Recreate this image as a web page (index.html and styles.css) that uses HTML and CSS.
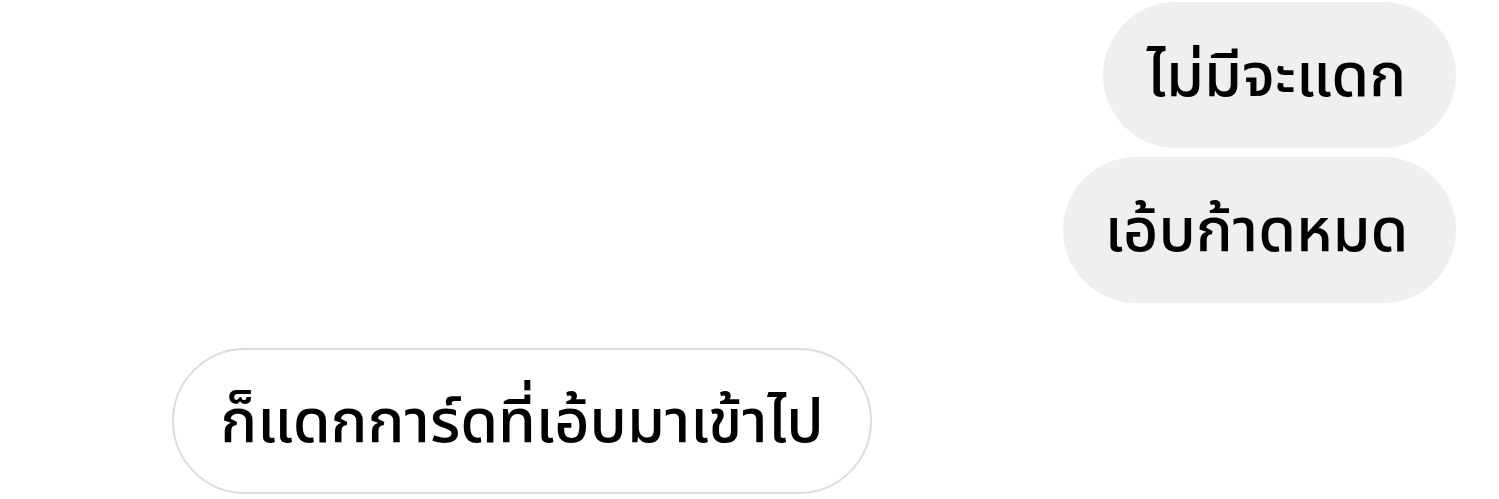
FILE: index.html
```html
<!DOCTYPE html>
<html lang="th">
<head>
<meta charset="utf-8">
<link rel="stylesheet" href="styles.css">
</head>
<body>
<div class="chat">
  <div class="row out"><div class="bubble gray b1">ไม่มีจะแดก</div></div>
  <div class="row out"><div class="bubble gray b2">เอ้บก้าดหมด</div></div>
  <div class="row in"><div class="bubble white b3">ก็แดกการ์ดที่เอ้บมาเข้าไป</div></div>
</div>
</body>
</html>
```
FILE: styles.css
```css
html, body {
  margin: 0;
  padding: 0;
  background: #ffffff;
}
body {
  width: 1499px;
  height: 499px;
  overflow: hidden;
  font-family: "Noto Sans Thai", "Noto Sans", "DejaVu Sans", sans-serif;
  color: #000;
}
.chat {
  display: flex;
  flex-direction: column;
  padding-top: 2px;
}
.row {
  display: flex;
}
.row.out {
  justify-content: flex-end;
  padding-right: 43px;
  margin-bottom: 9px;
}
.row.in {
  justify-content: flex-start;
  padding-left: 172px;
  margin-top: 36px;
}
.bubble {
  box-sizing: border-box;
  height: 146px;
  border-radius: 73px;
  display: flex;
  align-items: center;
  justify-content: center;
  font-size: 61px;
  font-weight: 500;
  white-space: nowrap;
  padding-top: 4px;
}
.gray {
  background: #efefef;
}
.b1 { width: 353px; padding-right: 6px; }
.b2 { width: 393px; padding-right: 6px; }
.white {
  background: #fff;
  border: 2px solid #dcdcdc;
  width: 700px;
}
```
